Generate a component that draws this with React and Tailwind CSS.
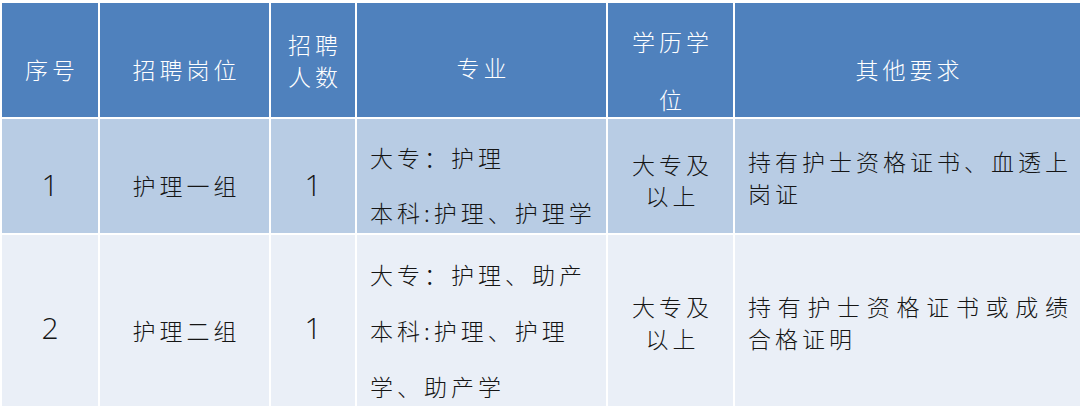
import React from "react";

const H = ({ children, className = "" }) => (
  <div className={`bg-[#4f81bd] text-white flex items-center justify-center text-center text-[23px] tracking-[4px] pl-[4px] ${className}`}>
    <div>{children}</div>
  </div>
);

const C = ({ children, className = "", bg }) => (
  <div className={`${bg} text-[#151515] flex items-center text-[23px] tracking-[4px] ${className}`}>
    <div>{children}</div>
  </div>
);

const L = ({ children }) => <div className="whitespace-nowrap">{children}</div>;
const J = ({ children }) => (
  <div className="w-[320px] whitespace-nowrap text-justify [text-align-last:justify] tracking-normal">{children}</div>
);

const D = ({ children, bg, className = "" }) => (
  <div className={`${bg} text-[#151515] flex items-center justify-center ${className}`}>
    <div className="font-['Open_Sans',sans-serif] font-light text-[30px] leading-[32px]">{children}</div>
  </div>
);

export default function App() {
  const r1 = "bg-[#b8cce4]";
  const r2 = "bg-[#eaeff7]";
  return (
    <div className="w-[1080px] h-[407px] bg-white pl-[2px] pt-[3px] overflow-hidden font-['Noto_Sans_CJK_SC',sans-serif] font-light">
      <div className="grid grid-cols-[96px_169px_84px_249px_125px_1fr] grid-rows-[114px_114px_171px] gap-[2px]">
        <H className="leading-[32px] pt-[18px]">序号</H>
        <H className="leading-[32px] pt-[18px]">招聘岗位</H>
        <H className="leading-[32px]"><L>招聘</L><L>人数</L></H>
        <H className="leading-[32px] pt-[14px]">专业</H>
        <H className="leading-[58px] pt-[20px]"><L>学历学</L><L>位</L></H>
        <H className="leading-[32px] pt-[18px]">其他要求</H>

        <D bg={r1} className="pt-[18px]">1</D>
        <C bg={r1} className="justify-center leading-[32px] pt-[18px] pl-[4px]">护理一组</C>
        <D bg={r1} className="pt-[18px]">1</D>
        <C bg={r1} className="leading-[55px] pt-[17px] pl-[13px]"><L>大专：护理</L><L>本科:护理、护理学</L></C>
        <C bg={r1} className="justify-center text-center leading-[31px] pt-[8px] pl-[4px]"><L>大专及</L><L>以上</L></C>
        <C bg={r1} className="leading-[32px] pt-[2px] pl-[13px]"><J>持有护士资格证书、血透上</J><L>岗证</L></C>

        <D bg={r2} className="pt-[15px]">2</D>
        <C bg={r2} className="justify-center leading-[32px] pt-[18px] pl-[4px]">护理二组</C>
        <D bg={r2} className="pt-[15px]">1</D>
        <C bg={r2} className="leading-[56px] pt-[19px] pl-[13px]"><L>大专：护理、助产</L><L>本科:护理、护理</L><L>学、助产学</L></C>
        <C bg={r2} className="justify-center text-center leading-[32px] pt-[3px] pl-[4px]"><L>大专及</L><L>以上</L></C>
        <C bg={r2} className="leading-[32px] pt-[3px] pl-[13px]"><J>持有护士资格证书或成绩</J><L>合格证明</L></C>
      </div>
    </div>
  );
}
